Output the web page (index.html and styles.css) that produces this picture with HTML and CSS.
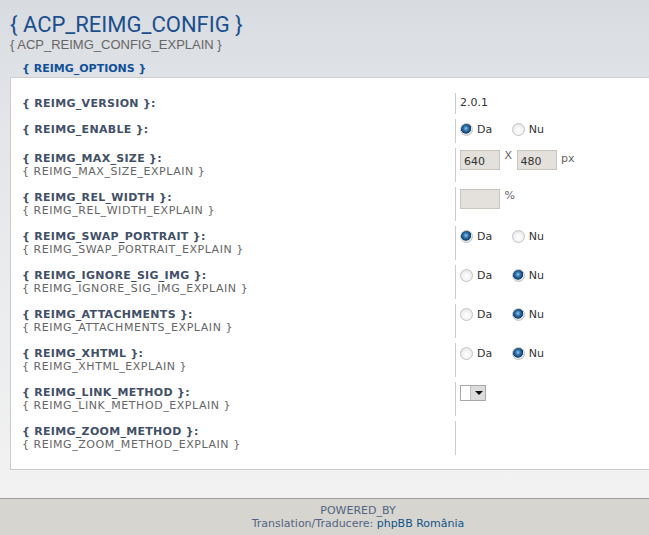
FILE: index.html
```html
<!DOCTYPE html>
<html lang="ro">
<head>
  <meta charset="UTF-8" />
  <title>ACP_REIMG_CONFIG</title>
  <link rel="stylesheet" href="styles.css">
</head>
<body>
  <div class="page">
    <div class="main">
      <h1>{ ACP_REIMG_CONFIG }</h1>
      <p class="intro">{ ACP_REIMG_CONFIG_EXPLAIN }</p>

      <div class="legend">{ REIMG_OPTIONS }</div>
      <div class="options">
        <dl>
          <dt><label>{ REIMG_VERSION }:</label></dt>
          <dd><span class="value">2.0.1</span></dd>
        </dl>
        <dl>
          <dt><label>{ REIMG_ENABLE }:</label></dt>
          <dd>
            <label class="radio"><input type="radio" name="enable" checked> Da</label>
            <label class="radio"><input type="radio" name="enable"> Nu</label>
          </dd>
        </dl>
        <dl>
          <dt><label>{ REIMG_MAX_SIZE }:</label><span>{ REIMG_MAX_SIZE_EXPLAIN }</span></dt>
          <dd>
            <input type="text" class="num" value="640"> <span class="times">X</span> <input type="text" class="num" value="480"> <span class="unit">px</span>
          </dd>
        </dl>
        <dl>
          <dt><label>{ REIMG_REL_WIDTH }:</label><span>{ REIMG_REL_WIDTH_EXPLAIN }</span></dt>
          <dd>
            <input type="text" class="num" value=""> <span class="unit pct">%</span>
          </dd>
        </dl>
        <dl>
          <dt><label>{ REIMG_SWAP_PORTRAIT }:</label><span>{ REIMG_SWAP_PORTRAIT_EXPLAIN }</span></dt>
          <dd>
            <label class="radio"><input type="radio" name="swap" checked> Da</label>
            <label class="radio"><input type="radio" name="swap"> Nu</label>
          </dd>
        </dl>
        <dl>
          <dt><label>{ REIMG_IGNORE_SIG_IMG }:</label><span>{ REIMG_IGNORE_SIG_IMG_EXPLAIN }</span></dt>
          <dd>
            <label class="radio"><input type="radio" name="sig"> Da</label>
            <label class="radio"><input type="radio" name="sig" checked> Nu</label>
          </dd>
        </dl>
        <dl>
          <dt><label>{ REIMG_ATTACHMENTS }:</label><span>{ REIMG_ATTACHMENTS_EXPLAIN }</span></dt>
          <dd>
            <label class="radio"><input type="radio" name="attach"> Da</label>
            <label class="radio"><input type="radio" name="attach" checked> Nu</label>
          </dd>
        </dl>
        <dl>
          <dt><label>{ REIMG_XHTML }:</label><span>{ REIMG_XHTML_EXPLAIN }</span></dt>
          <dd>
            <label class="radio"><input type="radio" name="xhtml"> Da</label>
            <label class="radio"><input type="radio" name="xhtml" checked> Nu</label>
          </dd>
        </dl>
        <dl>
          <dt><label>{ REIMG_LINK_METHOD }:</label><span>{ REIMG_LINK_METHOD_EXPLAIN }</span></dt>
          <dd>
            <div class="select"><span class="arrow"></span></div>
          </dd>
        </dl>
        <dl>
          <dt><label>{ REIMG_ZOOM_METHOD }:</label><span>{ REIMG_ZOOM_METHOD_EXPLAIN }</span></dt>
          <dd></dd>
        </dl>
      </div>
    </div>

    <div class="footer">
      POWERED_BY<br>
      Translation/Traducere: <a href="#">phpBB România</a>
    </div>
  </div>
</body>
</html>
```

FILE: styles.css
```css
html {
  overflow: hidden;
}
body {
  margin: 0;
  padding: 0;
  font-family: "DejaVu Sans", Verdana, sans-serif;
  font-size: 11px;
  color: #333;
  background: #f2f2f2;
}
.page {
  width: 716px;
}
.main {
  padding: 10px 0 28px 10px;
  background: linear-gradient(to bottom, #d8dbe0 0%, #e3e6e9 25%, #f2f2f2 100%);
}
h1 {
  margin: 2px 0 0;
  font-family: Roboto, "Liberation Sans", sans-serif;
  font-weight: normal;
  font-size: 22px;
  line-height: 25px;
  color: #1b4f8e;
}
.intro {
  margin: 0;
  font-family: "Liberation Sans", Arial, sans-serif;
  font-size: 13px;
  line-height: 16px;
  color: #666;
}
.legend {
  margin-top: 9px;
  padding-left: 12px;
  font-weight: bold;
  font-size: 11px;
  line-height: 14px;
  color: #115098;
}
.options {
  margin-top: 1px;
  background: #fff;
  border: 1px solid #ccc;
  border-right: none;
  padding: 15px 0 14px 11px;
}
dl {
  display: flex;
  margin: 0 0 5px 0;
}
dl:last-child {
  margin-bottom: 0;
}
dt {
  width: 433px;
  padding: 4px 0;
  line-height: 13px;
}
dt label {
  display: block;
  font-weight: bold;
  letter-spacing: 0.3px;
  color: #425067;
}
dt span {
  display: block;
  letter-spacing: 0.55px;
  color: #666;
}
dd {
  margin: 0;
  padding: 2px 0 4px 4px;
  border-left: 1px solid #ccc;
  line-height: 13px;
  color: #333;
}
.value {
  display: block;
  padding-top: 1px;
}
.radio {
  display: inline-flex;
  align-items: center;
  height: 17px;
  margin-right: 16px;
  color: #333;
}
.radio input {
  appearance: none;
  width: 13px;
  height: 13px;
  margin: 0 4px 0 0;
  border-radius: 50%;
  border: 1px solid #c4c4c4;
  background: radial-gradient(circle at 50% 60%, #fff 0%, #f4f4f4 45%, #dcdcdc 100%);
}
.radio input:checked {
  background: radial-gradient(circle at 45% 40%, #8fc2e8 0%, #2a6ea8 30%, #123e66 55%, #e8e8e8 62%, #cfcfcf 100%);
}
.num {
  width: 40px;
  height: 20px;
  box-sizing: border-box;
  margin: 0;
  padding: 2px 3px 0;
  border: 1px solid #c9c6c0;
  background: #e4e1dc;
  font-family: "DejaVu Sans", Verdana, sans-serif;
  font-size: 11px;
  color: #333;
  vertical-align: top;
}
.times {
  display: inline-block;
  margin: 0 1px;
  vertical-align: top;
  line-height: 11px;
  color: #666;
}
.unit {
  display: inline-block;
  margin-left: 1px;
  vertical-align: top;
  line-height: 17px;
  color: #666;
}
.pct {
  line-height: 14px;
}
.select {
  display: flex;
  justify-content: flex-end;
  width: 24px;
  height: 14px;
  margin-top: 1px;
  border: 1px solid #a9a9a9;
  background: #fff;
}
.arrow {
  width: 15px;
  height: 14px;
  box-sizing: border-box;
  border-left: 1px solid #c4c4c4;
  background: #dcdcdc;
  position: relative;
}
.arrow::after {
  content: "";
  position: absolute;
  left: 4px;
  top: 5px;
  border-left: 4px solid transparent;
  border-right: 4px solid transparent;
  border-top: 4px solid #111;
}
.footer {
  border-top: 1px solid #9f9f9f;
  background: #d7d5cf;
  padding: 5px 0 8px;
  text-align: center;
  line-height: 13px;
  color: #536482;
}
.footer a {
  color: #105289;
  text-decoration: none;
}
```
